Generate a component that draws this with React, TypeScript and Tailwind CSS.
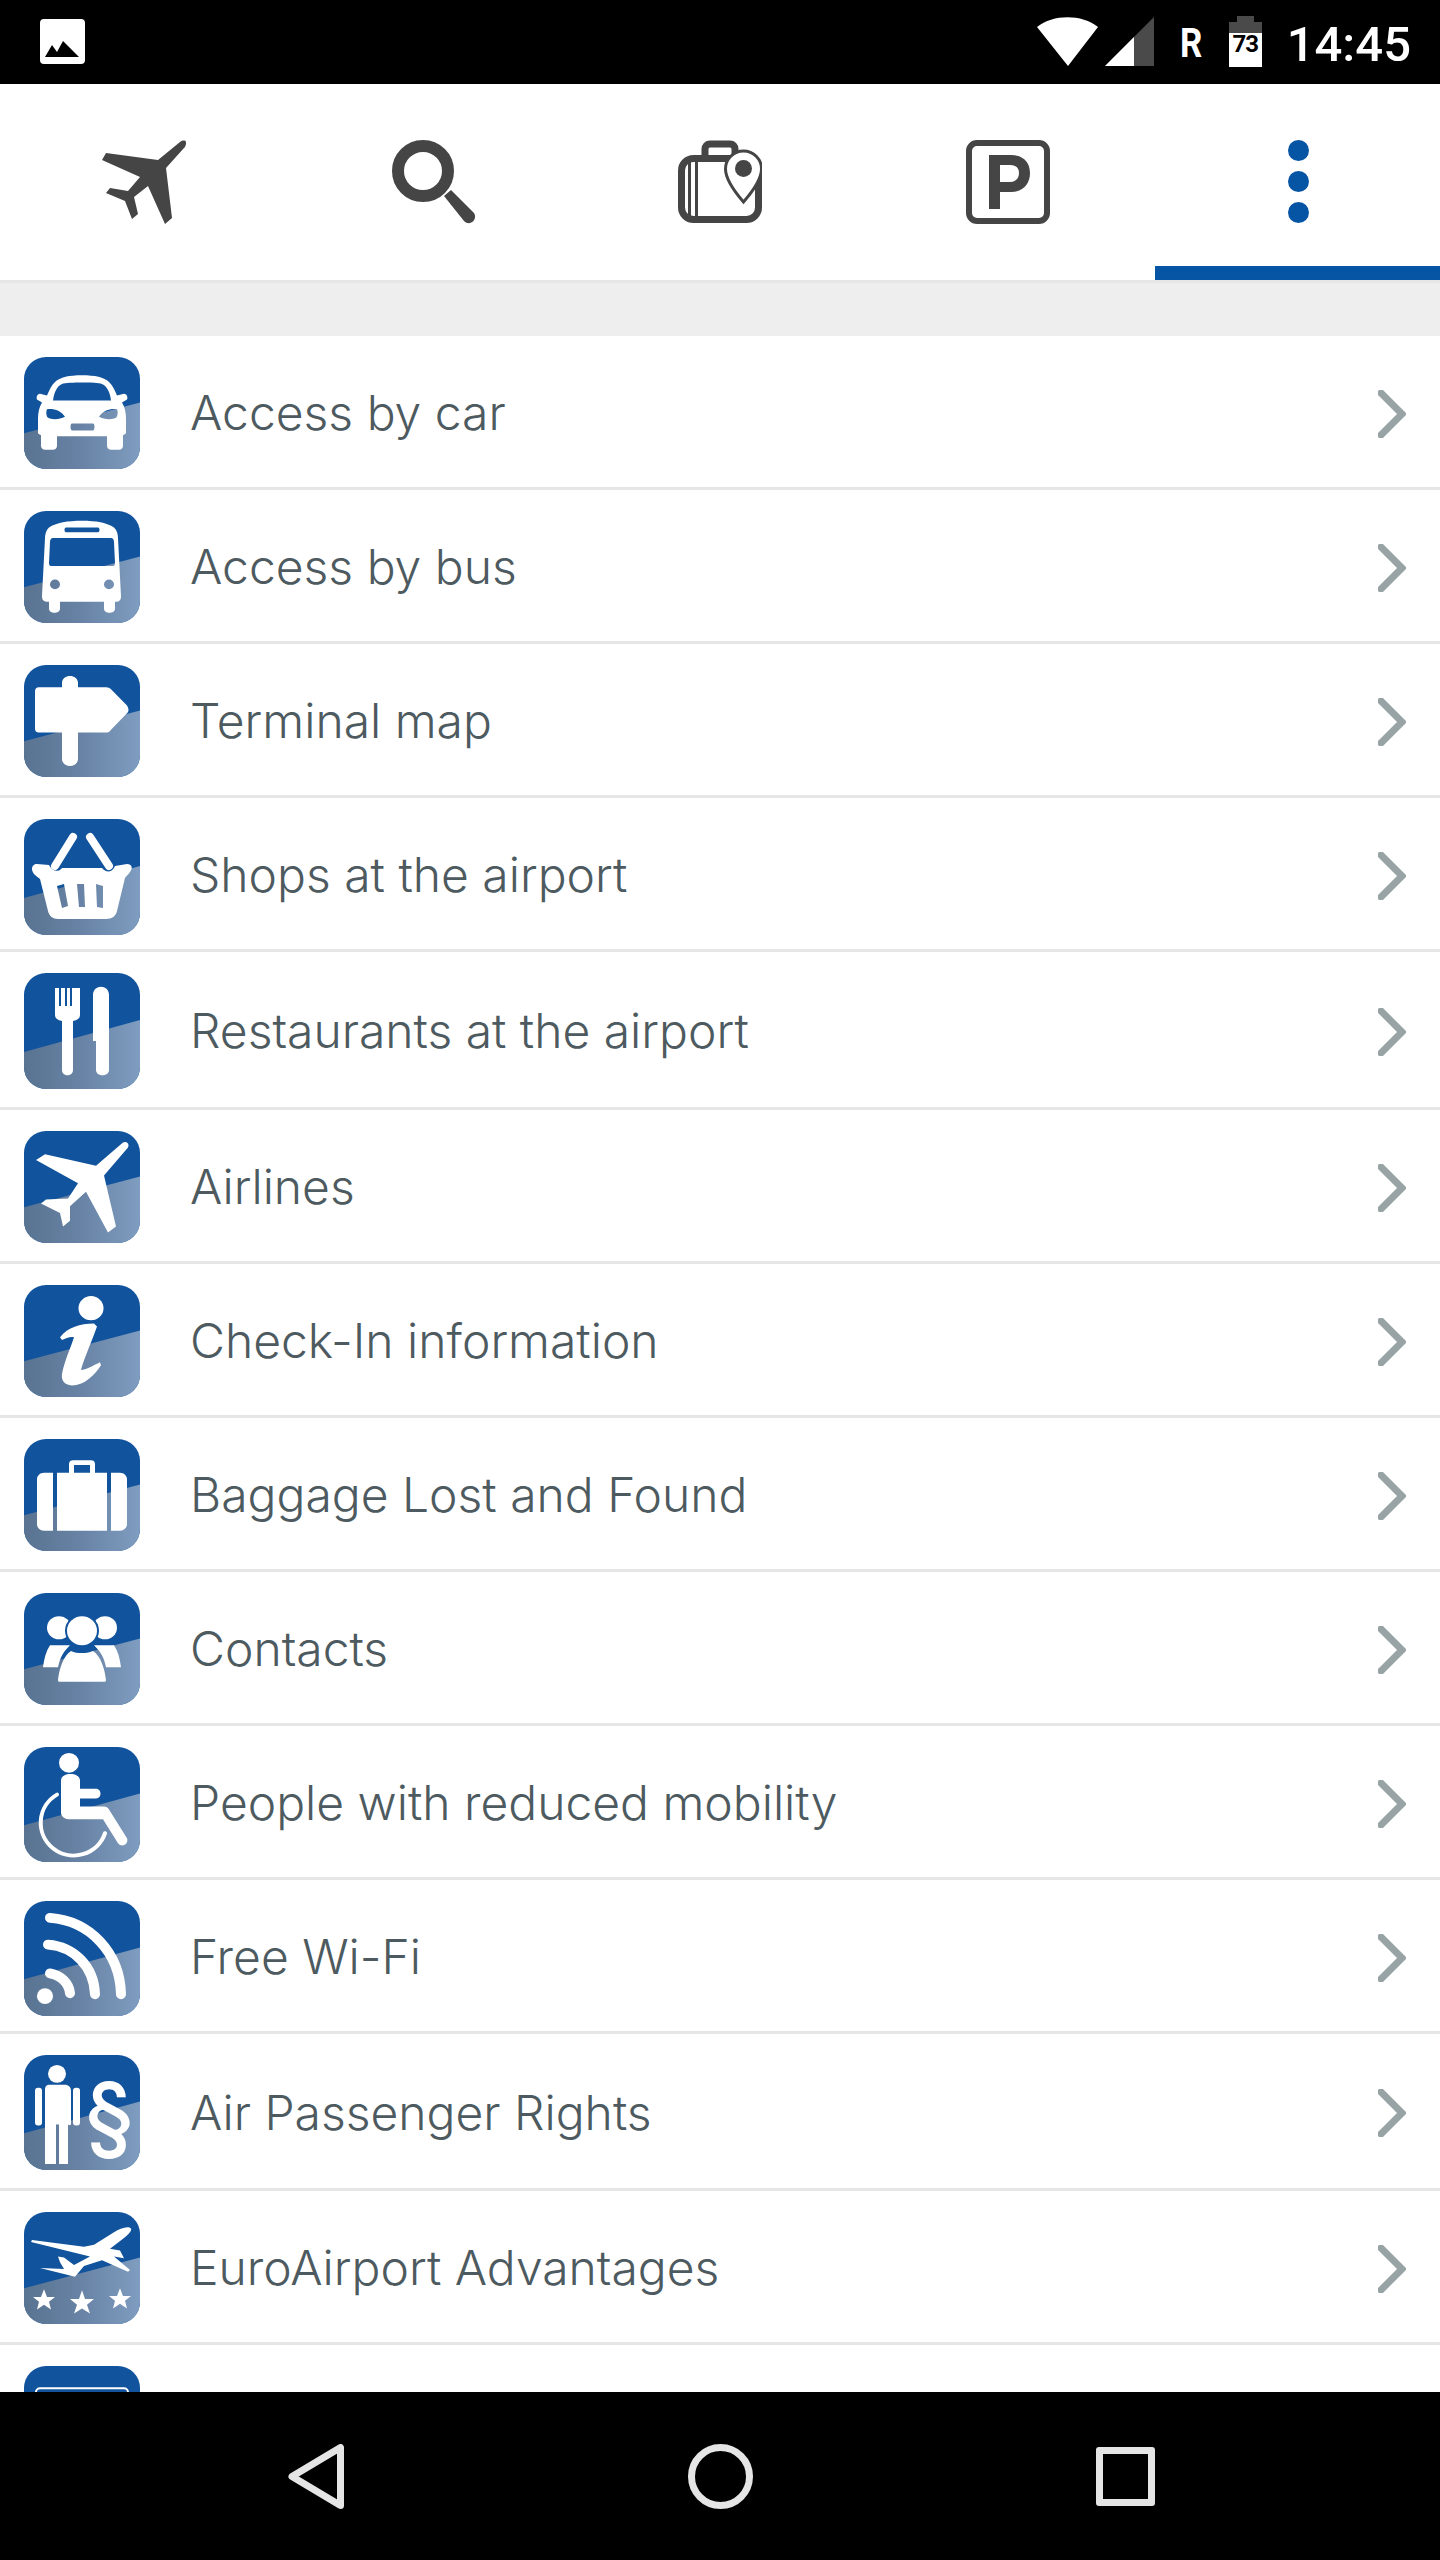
import type { ReactNode } from 'react';

const WHITE = '#ffffff';

function Tile({ id, className, children }: { id: string; className: string; children?: ReactNode }) {
  return (
    <div className={`w-[116px] shrink-0 overflow-hidden rounded-[22px] ${className}`}>
      <svg viewBox="0 0 116 116" preserveAspectRatio="none" className="block h-full w-full">
        <defs>
          <linearGradient id={`band-${id}`} x1="0" x2="1" y1="0" y2="0">
            <stop offset="0" stopColor="#597391" />
            <stop offset="0.5" stopColor="#6883a5" />
            <stop offset="1" stopColor="#7f9dc0" />
          </linearGradient>
        </defs>
        <rect width="116" height="116" fill="#11539c" />
        <polygon points="0,79 116,47 116,116 0,116" fill={`url(#band-${id})`} />
        {children}
      </svg>
    </div>
  );
}

const glyphs: Record<string, ReactNode> = {
  car: (
    <path
      fill={WHITE}
      fillRule="evenodd"
      d="M58 19C45 19 36 21 31 26C27 30 25 35 23 40L16 38C13 38 12 42 13 44L18 47C15 52 14 58 14 64V78C14 80 15 80 17 81V92C17 95 19 96 21 96H29C31 96 33 95 33 92V82H83V92C83 95 85 96 87 96H95C97 96 99 95 99 92V81C101 80 102 80 102 78V64C102 58 101 52 98 47L103 44C104 42 103 38 100 38L93 40C91 35 89 30 85 26C80 21 71 19 58 19ZM29 45C30 37 33 30 38 28C44 26 72 26 78 28C83 30 86 37 87 45ZM23 54C29 53 37 55 41 62C36 65 27 65 24 63C22 61 22 56 23 54ZM93 54C87 53 79 55 75 62C80 65 89 65 92 63C94 61 94 56 93 54ZM48 69H69C71 69 71 76 69 76H48C46 76 46 69 48 69Z"
    />
  ),
  bus: (
    <path
      fill={WHITE}
      fillRule="evenodd"
      d="M58 10C44 10 32 12 25 17C22 20 21 24 21 28L18 88C18 92 19 94 25 94V101C25 107 36 107 36 101V94H80V101C80 107 91 107 91 101V94C96 94 97 92 97 88L94 28C94 24 93 20 90 17C83 12 72 10 58 10ZM42 17H74C76 17 76 22 74 22H42C40 22 40 17 42 17ZM29 28H87C89 28 90 30 90 32L91 54C91 56 90 57 88 57H28C26 57 25 56 25 54L26 32C26 30 27 28 29 28ZM31 71A5 5 0 1 1 31 81A5 5 0 1 1 31 71ZM85 71A5 5 0 1 1 85 81A5 5 0 1 1 85 71Z"
    />
  ),
  sign: (
    <path
      fill={WHITE}
      d="M38 23V19C38 9 54 9 54 19V23H82C84 23 86 24 87 25L103 42C105 45 105 48 103 50L87 67C86 69 84 70 82 70H54V97C54 107 38 107 38 97V70H15C12 70 11 68 11 66V27C11 25 12 23 15 23Z"
    />
  ),
  basket: (
    <g>
      <path
        fill={WHITE}
        fillRule="evenodd"
        d="M13 45L25 46C28 52 34 54 38 49H78C82 54 88 54 91 47L103 45C108 45 109 49 106 53C104 56 102 57 101 59L93 92C92 97 88 100 82 100H34C29 100 25 97 24 92L16 60C12 57 8 54 8 50C8 47 10 45 13 45ZM33 67L40 65L44 87L38 89ZM53 65L60 65L61 88L55 88ZM72 65L79 67L79 89L73 88Z"
      />
      <path d="M49 18L31 47M66 18L85 47" stroke={WHITE} strokeWidth="8" strokeLinecap="round" />
    </g>
  ),
  cutlery: (
    <path
      fill={WHITE}
      d="M31 15H35V33H37V15H41V33H43V15H46V33H48V15H56V42C56 45 54 47 49 48V97C49 104 38 104 38 97V48C33 47 31 45 31 42ZM69 22C69 11 85 11 85 22V97C85 104 72 104 72 97V68H69Z"
    />
  ),
  plane: (
    <path
      fill={WHITE}
      d="M99 12C102 10 106 13 104 17L80 46L92 99L84 105L62 63L46 78L46 93L39 99L36 85L17 75L22 71L44 70L54 54L12 30L21 24L72 36Z"
    />
  ),
  info: (
    <g fill={WHITE}>
      <circle cx="67" cy="24" r="12.5" />
      <path d="M36 54C44 44 56 40 70 40L73 43C68 58 60 76 57 88C62 88 68 84 76 80L77 83C70 94 60 104 48 104C40 104 37 98 38 92C40 80 47 64 50 54C46 53 42 55 38 57Z" />
    </g>
  ),
  case: (
    <path
      fill={WHITE}
      fillRule="evenodd"
      d="M45 35V26C45 23 47 22 49 22H67C69 22 71 23 71 26V35H83V95H33V35ZM50 27V35H66V27ZM29 35V95H20C16 95 13 92 13 88V42C13 38 16 35 20 35ZM87 35H96C100 35 103 38 103 42V88C103 92 100 95 96 95H87Z"
    />
  ),
  people: (
    <g fill={WHITE}>
      <circle cx="35" cy="36" r="12" />
      <circle cx="81" cy="36" r="12" />
      <path d="M26 54H46C40 60 36 66 34 77H19C20 68 22 60 26 54ZM70 54H90C94 60 96 68 97 77H82C80 66 76 60 70 54Z" />
      <circle cx="58" cy="39" r="17" fill="#11539c" />
      <circle cx="58" cy="39" r="15" />
      <path d="M47 60C53 63 63 63 69 60C77 65 81 80 82 90C82 92 81 92 79 92H37C35 92 34 92 34 90C35 80 39 65 47 60Z" />
    </g>
  ),
  wheelchair: (
    <g>
      <circle cx="45" cy="16" r="10" fill={WHITE} />
      <path
        fill={WHITE}
        d="M37 34C37 25 56 25 56 34V42H72C78 42 78 52 72 52H56V60H80C82 60 84 61 85 63L103 92C105 98 98 102 94 97L79 73H46C41 73 37 70 37 66Z"
      />
      <path d="M33 48A33 33 0 1 0 81 87" fill="none" stroke={WHITE} strokeWidth="4" strokeLinecap="round" />
    </g>
  ),
  wifi: (
    <g fill="none" stroke={WHITE} strokeWidth="10" strokeLinecap="round">
      <circle cx="21" cy="96" r="8" fill={WHITE} stroke="none" />
      <path d="M26 73C37 75 45 83 46 93" />
      <path d="M24 44C50 46 70 66 71 94" />
      <path d="M26 17C66 20 96 52 97 94" />
    </g>
  ),
  rights: (
    <g fill={WHITE}>
      <circle cx="33" cy="19" r="9" />
      <path d="M26 30H40C44 30 47 32 47 36V70C45 71 45 71 44 70V110H35V70H32V110H21V70V36C21 32 22 30 26 30Z" />
      <rect x="11" y="33" width="7" height="38" rx="3" />
      <rect x="49" y="33" width="7" height="38" rx="3" />
      <text x="85.500" y="92" textAnchor="middle" fontSize="88" fontFamily="Inter, sans-serif" fontWeight="500">
        §
      </text>
    </g>
  ),
  advantages: (
    <g fill={WHITE}>
      <path d="M107 17C108 20 104 23 100 27L86 38L96 40L100 48L90 46L106 60L104 62L78 50L60 56L51 67L16 58L40 59L36 52L34 46L40 47L50 55L66 46L7 31L8 29L60 36L70 34L90 21C96 17 104 14 107 17Z" />
      <polygon points="20,80 23,88 31,88 25,93 27,101 20,96 13,101 15,93 9,88 17,88" />
      <polygon points="58,81 61,90 70,90 63,96 66,105 58,100 50,105 53,96 46,90 55,90" />
      <polygon points="96,79 99,87 107,87 101,92 103,100 96,95 89,100 91,92 85,87 93,87" />
    </g>
  ),
  more: <rect x="12" y="23" width="92" height="60" rx="4" fill="none" stroke={WHITE} strokeWidth="2" />,
};

const rows = [
  { id: 'car', label: 'Access by car', row: 'h-[154px]', icon: 'h-[112px]' },
  { id: 'bus', label: 'Access by bus', row: 'h-[154px]', icon: 'h-[112px]' },
  { id: 'sign', label: 'Terminal map', row: 'h-[154px]', icon: 'h-[112px]' },
  { id: 'basket', label: 'Shops at the airport', row: 'h-[154px]', icon: 'h-[116px]' },
  { id: 'cutlery', label: 'Restaurants at the airport', row: 'h-[158px]', icon: 'h-[116px]' },
  { id: 'plane', label: 'Airlines', row: 'h-[154px]', icon: 'h-[112px]' },
  { id: 'info', label: 'Check-In information', row: 'h-[154px]', icon: 'h-[112px]' },
  { id: 'case', label: 'Baggage Lost and Found', row: 'h-[154px]', icon: 'h-[112px]' },
  { id: 'people', label: 'Contacts', row: 'h-[154px]', icon: 'h-[112px]' },
  { id: 'wheelchair', label: 'People with reduced mobility', row: 'h-[154px]', icon: 'h-[115px]' },
  { id: 'wifi', label: 'Free Wi-Fi', row: 'h-[154px]', icon: 'h-[115px]' },
  { id: 'rights', label: 'Air Passenger Rights', row: 'h-[157px]', icon: 'h-[115px]' },
  { id: 'advantages', label: 'EuroAirport Advantages', row: 'h-[154px]', icon: 'h-[112px]' },
  { id: 'more', label: '', row: 'h-[154px]', icon: 'h-[112px]' },
];

function StatusBar() {
  return (
    <div className="relative flex h-[84px] shrink-0 items-start bg-black font-['Roboto',sans-serif] text-white">
      <div className="ml-[40px] mt-[19px] h-[45px] w-[45px] rounded-[4px] bg-white">
        <svg viewBox="0 0 45 45" className="block h-full w-full">
          <polygon points="5,38 12,26 17,33 23,22 39,38" fill="#000" />
        </svg>
      </div>
      <div className="ml-auto flex items-start">
        <svg viewBox="0 0 117 49" className="mt-[17px] h-[49px] w-[117px]">
          <path d="M0 10C16 -3 45 -3 61 10L31 49Z" fill="#fff" />
          <polygon points="68,49 117,0 117,49" fill="#4a4a4a" />
          <polygon points="68,49 97,20 97,49" fill="#fff" />
        </svg>
        <span className="ml-[26px] mt-[21px] w-[24px] origin-left scale-x-[0.85] text-[41px] font-bold leading-[44px]">R</span>
        <div className="ml-[25px] mt-[16px] flex w-[33px] flex-col items-center">
          <div className="h-[6px] w-[17px] bg-[#4a4a4a]" />
          <div className="h-[11px] w-full bg-[#4a4a4a]" />
          <div className="h-[34px] w-full bg-white text-center text-[24px] font-bold leading-[22px] tracking-[-1px] text-black">
            73
          </div>
        </div>
        <span className="ml-[25px] mr-[29px] mt-[17px] text-[49px] font-medium leading-[56px]">14:45</span>
      </div>
    </div>
  );
}

function TabBar() {
  return (
    <div className="grid h-[196px] shrink-0 grid-cols-5 bg-white">
      <div className="flex justify-center pt-[56px]">
        <svg viewBox="0 0 84 84" className="h-[84px] w-[84px]">
          <path
            d="M78 2C82 -1 85 1 84 4C83 8 82 8 82 8L64 28L70 78L63 84L46 46L32 57L36 74L30 79L23 61L4 53L8 48L26 51L38 37L0 20L4 13L56 20Z"
            fill="#454545"
          />
        </svg>
      </div>
      <div className="flex justify-center pl-[4px] pt-[56px]">
        <svg viewBox="0 0 84 84" className="h-[84px] w-[84px]">
          <circle cx="31" cy="31" r="25" fill="none" stroke="#454545" strokeWidth="12" />
          <path d="M52 56L59 50L82 73C86 79 78 87 72 81Z" fill="#454545" />
        </svg>
      </div>
      <div className="flex justify-center pt-[56px]">
        <svg viewBox="0 0 84 84" className="h-[84px] w-[84px]">
          <g fill="none" stroke="#454545">
            <path d="M27 18V9C27 6 29 4 32 4H52C55 4 57 6 57 9V18" strokeWidth="7" />
            <rect x="3.500" y="18.500" width="77" height="61" rx="12" strokeWidth="7" />
            <path d="M11.500 20V78M18.500 20V78" strokeWidth="3" />
          </g>
          <path
            d="M65.500 11C75.500 11 83.500 19 83.500 29C83.500 38 75 51 65.500 62C56 51 47.500 38 47.500 29C47.500 19 55.500 11 65.500 11Z"
            fill="#fff"
            stroke="#454545"
            strokeWidth="3"
          />
          <circle cx="65.500" cy="28.500" r="8.500" fill="#454545" />
        </svg>
      </div>
      <div className="flex justify-center pt-[56px]">
        <svg viewBox="0 0 84 84" className="h-[84px] w-[84px]">
          <rect x="3" y="3" width="78" height="78" rx="8" fill="none" stroke="#454545" strokeWidth="6" />
          <path
            d="M23 15H45C57 15 64 22 64 33C64 44 57 52 45 52H34V69H23ZM34 25V42H44C50 42 53 38 53 33C53 28 50 25 44 25Z"
            fill="#454545"
          />
        </svg>
      </div>
      <div className="ml-[3px] flex flex-col items-center gap-[10px] border-b-[14px] border-[#0654a4] pl-[2px] pt-[56px]">
        <div className="h-[21px] w-[21px] rounded-full bg-[#0654a4]" />
        <div className="h-[21px] w-[21px] rounded-full bg-[#0654a4]" />
        <div className="h-[21px] w-[21px] rounded-full bg-[#0654a4]" />
      </div>
    </div>
  );
}

function Row({ id, label, row, icon }: (typeof rows)[number]) {
  return (
    <div className={`flex shrink-0 items-center border-b-[3px] border-[#e6e6e6] bg-white pl-[24px] pr-[34px] ${row}`}>
      <div className="mb-auto mt-[21px]">
        <Tile id={id} className={icon}>
          {glyphs[id]}
        </Tile>
      </div>
      <span className="ml-[50px] mt-[3px] flex-1 text-[48px] font-light leading-[60px] text-[#4d5a60]">
        {label}
      </span>
      {label ? (
        <svg viewBox="0 0 28 48" className="mt-[4px] h-[48px] w-[28px]">
          <path d="M3 3L24 24L3 45" fill="none" stroke="#98a3a5" strokeWidth="7" strokeLinecap="round" />
        </svg>
      ) : null}
    </div>
  );
}

function NavBar() {
  return (
    <div className="flex h-[168px] shrink-0 items-center bg-black pl-[288px]">
      <svg viewBox="0 0 56 65" className="h-[65px] w-[56px]">
        <path d="M52.500 3.500V61.500L4 32.500Z" fill="none" stroke="#e5e5e5" strokeWidth="7" strokeLinejoin="round" />
      </svg>
      <div className="ml-[344px] h-[65px] w-[65px] rounded-full border-[7px] border-[#e5e5e5]" />
      <div className="ml-[343px] h-[59px] w-[59px] rounded-[3px] border-[7px] border-[#e5e5e5]" />
    </div>
  );
}

export default function App() {
  return (
    <div className="flex h-[2560px] w-[1440px] flex-col overflow-hidden bg-white font-['Inter',sans-serif]">
      <StatusBar />
      <TabBar />
      <div className="h-[56px] shrink-0 border-t-[3px] border-[#e6e6e6] bg-[#eeeeee]" />
      <div className="flex min-h-0 flex-1 flex-col overflow-hidden">
        {rows.map((item) => (
          <Row key={item.id} {...item} />
        ))}
      </div>
      <NavBar />
    </div>
  );
}
